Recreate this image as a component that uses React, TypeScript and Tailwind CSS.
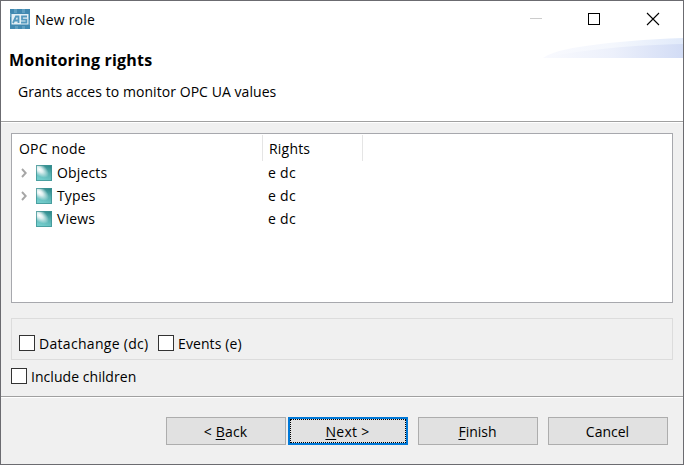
import React from "react";

function AppIcon() {
  return (
    <svg width="20" height="20" viewBox="0 0 20 20" className="block shrink-0">
      <rect width="20" height="20" fill="#4189b1" />
      <path d="M4 0h3v4H4zM12 0h3v4h-3zM0 4h1v4H0zM5 17h3v3H5zM12 17h3v3h-3zM19 11h1v5h-1z" fill="#5f9fc1" />
      <rect x="1.5" y="5" width="17" height="10.5" fill="#e3eff5" />
      <path d="M3 14 L6 7.5 H8.5 V14 M4.5 11.5 H8.5 M17 7.5 H12 V10.6 H16.4 V13.5 H11" fill="none" stroke="#5599be" strokeWidth="1.8" />
    </svg>
  );
}

function NodeIcon({ id }: { id: string }) {
  return (
    <svg width="16" height="16" viewBox="0 0 16 16" className="block shrink-0">
      <defs>
        <linearGradient id={id + "a"} x1="1" y1="0" x2="0.6" y2="1">
          <stop offset="0" stopColor="#237f80" />
          <stop offset="0.5" stopColor="#55adae" />
          <stop offset="1" stopColor="#72cccb" />
        </linearGradient>
        <radialGradient id={id + "b"} gradientUnits="userSpaceOnUse" cx="0" cy="0" r="1" gradientTransform="translate(3.5 4.5) rotate(38) scale(11 6)">
          <stop offset="0" stopColor="#fff" />
          <stop offset="0.35" stopColor="#fff" stopOpacity="0.8" />
          <stop offset="1" stopColor="#fff" stopOpacity="0" />
        </radialGradient>
      </defs>
      <rect width="16" height="16" fill={`url(#${id}a)`} />
      <rect width="16" height="16" fill={`url(#${id}b)`} />
      <rect x="0.5" y="0.5" width="15" height="15" fill="none" stroke="#3d9293" strokeOpacity="0.75" />
    </svg>
  );
}

function Chevron() {
  return (
    <svg width="6" height="10" viewBox="0 0 6 10" className="block">
      <path d="M1 1 L4.7 5 L1 9" fill="none" stroke="#a6a6a6" strokeWidth="1.9" />
    </svg>
  );
}

function Swoosh() {
  return (
    <svg width="140" height="20" viewBox="0 0 140 20" className="block">
      <defs>
        <linearGradient id="swa" x1="0" x2="1">
          <stop offset="0" stopColor="#f8f9fe" />
          <stop offset="0.5" stopColor="#f4f7fd" />
          <stop offset="1" stopColor="#e1eafa" />
        </linearGradient>
        <linearGradient id="swb" x1="0" x2="1">
          <stop offset="0" stopColor="#f9fafe" />
          <stop offset="0.5" stopColor="#ecf0fb" />
          <stop offset="1" stopColor="#d2dcf5" />
        </linearGradient>
      </defs>
      <path d="M0 20 C12 10 65 3 140 0 V20 Z" fill="url(#swa)" />
      <path d="M0 20 C25 14 80 7 140 6 V20 Z" fill="url(#swb)" />
    </svg>
  );
}

function Check({ label, tracking }: { label: string; tracking: string }) {
  return (
    <label className="flex h-4 items-center">
      <span className="size-4 shrink-0 border border-[#333] bg-white" />
      <span className={"mt-px " + tracking}>{label}</span>
    </label>
  );
}

function Button({ children, focused }: { children: React.ReactNode; focused?: boolean }) {
  return (
    <button
      className={
        "relative flex h-7 w-[120px] items-center justify-center bg-[#e1e1e1] pt-px " +
        (focused ? "border-2 border-[#0078d7]" : "border border-[#adadad]")
      }
    >
      {focused && <span className="absolute inset-0 border border-dotted border-black" />}
      <span className="-ml-px whitespace-pre">{children}</span>
    </button>
  );
}

function Key({ children }: { children: string }) {
  return <span className="underline decoration-1 underline-offset-2">{children}</span>;
}

const nodes = [
  { name: "Objects", expandable: true },
  { name: "Types", expandable: true },
  { name: "Views", expandable: false },
];

export default function App() {
  return (
    <div className="flex h-[465px] w-[684px] flex-col overflow-hidden border border-[#6b6b70] bg-[#f0f0f0] font-['Open_Sans','Noto_Sans',sans-serif] text-[14px] leading-5 text-black">
      <div className="flex h-[37px] shrink-0 justify-between bg-white">
        <div className="flex items-start pl-[9px] pt-2">
          <AppIcon />
          <span className="ml-[5px] mt-px tracking-[0.2px]">New role</span>
        </div>
        <svg width="160" height="37" viewBox="0 0 160 37" className="block" fill="none">
          <path d="M7 17.5h12" stroke="#ccc" />
          <rect x="65.5" y="12.5" width="11" height="11" stroke="#000" />
          <path d="M124 12 l12 12 M136 12 l-12 12" stroke="#000" strokeWidth="1.1" />
        </svg>
      </div>
      <div className="flex h-[83px] shrink-0 justify-between bg-white">
        <div className="flex flex-col pl-2">
          <h1 className="mt-[12px] text-[16px] font-bold leading-5 tracking-[0.22px]">Monitoring rights</h1>
          <p className="ml-[9px] mt-[12px] tracking-[0.06px]">Grants acces to monitor OPC UA values</p>
        </div>
        <Swoosh />
      </div>
      <div className="h-0.5 shrink-0 border-b border-t border-b-white border-t-[#a0a0a0]" />

      <div className="mx-[10px] mt-[10px] h-[170px] shrink-0 border border-[#a7a8ad] bg-white">
        <div className="flex h-[27px] pt-px">
          <div className="w-[251px] border-r border-[#e5e5e5] pl-[7px] pt-1 tracking-[0.2px]">OPC node</div>
          <div className="w-[100px] border-r border-[#e5e5e5] pl-[6px] pt-1 tracking-[0.2px]">Rights</div>
        </div>
        {nodes.map((n) => (
          <div key={n.name} className="flex h-[23px] items-center tracking-[0.15px]">
            <span className="ml-[9px] w-[15px]">{n.expandable && <Chevron />}</span>
            <NodeIcon id={n.name} />
            <span className="ml-[5px] w-[211px]">{n.name}</span>
            <span className="tracking-[0.3px]">e dc</span>
          </div>
        ))}
      </div>

      <div className="mx-[10px] mt-[15px] flex h-[42px] shrink-0 gap-[9px] border border-[#dcdcdc] pl-[7px] pt-4">
        <div className="w-[130px]">
          <Check label="Datachange (dc)" tracking="ml-[4px] whitespace-nowrap tracking-[0.3px]" />
        </div>
        <Check label="Events (e)" tracking="ml-[4px] tracking-[0.1px]" />
      </div>
      <div className="ml-[10px] mt-2">
        <Check label="Include children" tracking="ml-[4px] tracking-[0.05px]" />
      </div>

      <div className="mt-3 h-0.5 shrink-0 border-b border-t border-b-white border-t-[#a0a0a0]" />
      <div className="flex pl-[165px] pt-[19px]">
        <Button><span className="tracking-[0.2px]">{"< "}<Key>B</Key>ack</span></Button>
        <div className="ml-[2px]"><Button focused><span className="tracking-[0.3px]"><Key>N</Key>{"ext >"}</span></Button></div>
        <div className="ml-[10px]"><Button><Key>F</Key>inish</Button></div>
        <div className="ml-[10px]"><Button>Cancel</Button></div>
      </div>
    </div>
  );
}
